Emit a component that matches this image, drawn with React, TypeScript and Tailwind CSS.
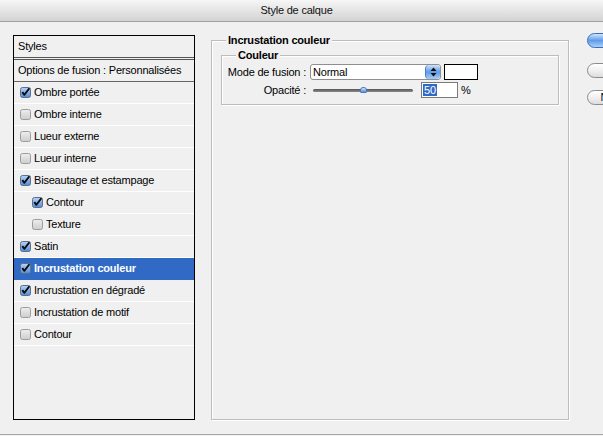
import React from "react";

type Layer = {
  label: string;
  checked?: boolean;
  indent?: boolean;
  selected?: boolean;
};

const layers: Layer[] = [
  { label: "Ombre portée", checked: true },
  { label: "Ombre interne" },
  { label: "Lueur externe" },
  { label: "Lueur interne" },
  { label: "Biseautage et estampage", checked: true },
  { label: "Contour", checked: true, indent: true },
  { label: "Texture", indent: true },
  { label: "Satin", checked: true },
  { label: "Incrustation couleur", checked: true, selected: true },
  { label: "Incrustation en dégradé", checked: true },
  { label: "Incrustation de motif" },
  { label: "Contour" },
];

const CheckBox = ({ checked }: { checked?: boolean }) => (
  <svg width="11" height="11" viewBox="0 0 11 11" className="shrink-0">
    <defs>
      <linearGradient id="cbOff" x1="0" y1="0" x2="0" y2="1">
        <stop offset="0" stopColor="#eeeeee" />
        <stop offset="1" stopColor="#cdcdcd" />
      </linearGradient>
      <linearGradient id="cbOn" x1="0" y1="0" x2="0" y2="1">
        <stop offset="0" stopColor="#b8d4f4" />
        <stop offset="1" stopColor="#4f8ad6" />
      </linearGradient>
    </defs>
    <rect
      x="0.5"
      y="0.5"
      width="10"
      height="10"
      rx="2"
      fill={checked ? "url(#cbOn)" : "url(#cbOff)"}
      stroke={checked ? "#5a6f8c" : "#9c9c9c"}
    />
    {checked && (
      <path
        d="M2.3 5.2 L4.4 7.8 L9.4 1.2"
        fill="none"
        stroke="#0a0a0a"
        strokeWidth="1.9"
        strokeLinejoin="round"
      />
    )}
  </svg>
);

const AquaButton = ({
  label,
  primary,
  className,
}: {
  label: string;
  primary?: boolean;
  className?: string;
}) => (
  <div
    className={`h-[15px] w-[106px] shrink-0 rounded-l-full border flex items-center justify-center text-[11px] leading-none whitespace-nowrap overflow-hidden ${
      primary
        ? "border-[#3a6fb8] bg-gradient-to-b from-[#cfe3fb] via-[#5f9ce8] to-[#a9d0fb] text-white"
        : "border-[#8c8c8c] bg-gradient-to-b from-[#ffffff] via-[#f0f0f0] to-[#dcdcdc] text-black"
    } ${className ?? ""}`}
  >
    {label}
  </div>
);

export default function App() {
  return (
    <div
      className="w-[603px] h-[436px] bg-[#f0f0f0] overflow-hidden flex flex-col text-black"
      style={{ fontFamily: '"Liberation Sans", Arial, sans-serif' }}
    >
      {/* Title bar */}
      <div className="h-[22px] shrink-0 border-b border-[#a0a0a0] bg-gradient-to-b from-[#f6f6f6] to-[#d3d3d3] flex items-center justify-center pr-[10px]">
        <span className="text-[11px] tracking-[-0.2px] text-[#111]">Style de calque</span>
      </div>

      <div className="flex flex-1 min-h-0">
        {/* Left styles list */}
        <div className="shrink-0 ml-[13px] mt-[13px] w-[182px] h-[385px] border border-black flex flex-col text-[11px] tracking-[-0.2px] whitespace-nowrap">
          <div className="h-[21px] flex items-center pl-[4px]">Styles</div>
          <div className="h-[3px] border-y border-[#555]" />
          <div className="h-[22px] flex items-center pl-[4px] border-b border-[#666]">
            Options de fusion : Personnalisées
          </div>
          {layers.map((l, i) => (
            <div
              key={i}
              className={`h-[22px] flex items-center gap-[3px] border-b ${
                l.indent ? "pl-[18px]" : "pl-[6px]"
              } ${
                l.selected
                  ? "bg-[#316ac5] text-white font-bold border-[#316ac5]"
                  : "border-white"
              }`}
            >
              <CheckBox checked={l.checked} />
              <span>{l.label}</span>
            </div>
          ))}
        </div>

        {/* Right settings */}
        <div className="shrink-0 ml-[16px] mt-[18px] w-[358px] h-[380px] border border-[#bdbdbd] shadow-[inset_1px_1px_0_#ffffff,1px_1px_0_#ffffff] relative whitespace-nowrap">
          <span className="absolute -top-[6px] left-[14px] px-[2px] bg-[#f0f0f0] text-[11px] font-bold leading-none tracking-[-0.2px]">
            Incrustation couleur
          </span>
          <div className="mt-[14px] mx-[9px] h-[50px] border border-[#bdbdbd] shadow-[inset_1px_1px_0_#ffffff,1px_1px_0_#ffffff] relative text-[11px] tracking-[-0.2px]">
            <span className="absolute -top-[6px] left-[14px] px-[2px] bg-[#f0f0f0] font-bold leading-none">
              Couleur
            </span>
            <div className="flex flex-col pt-[8px] gap-[2px]">
              {/* Blend mode row */}
              <div className="flex items-center h-[16px]">
                <span className="w-[84px] text-right">Mode de fusion :</span>
                <div className="ml-[4px] w-[131px] h-[16px] bg-white border border-[#8f8f8f] rounded-[3px] flex items-center justify-between pl-[2px] overflow-hidden">
                  <span>Normal</span>
                  <div className="w-[15px] h-[14px] rounded-r-[3px] rounded-l-[4px] bg-gradient-to-b from-[#cfe2fb] via-[#5d9ae8] to-[#a6cdf9] border-l border-[#4f7fc0] flex items-center justify-center">
                    <svg width="7" height="10" viewBox="0 0 7 10">
                      <path d="M3.5 0.5 L6.5 4 L0.5 4 Z" fill="#111" />
                      <path d="M3.5 9.5 L6.5 6 L0.5 6 Z" fill="#111" />
                    </svg>
                  </div>
                </div>
                <div className="ml-[3px] w-[34px] h-[16px] bg-white border border-black" />
              </div>
              {/* Opacity row */}
              <div className="flex items-center h-[16px]">
                <span className="w-[84px] text-right">Opacité :</span>
                <div className="ml-[7px] w-[100px] h-[6px] flex items-center relative">
                  <div className="w-full h-[3px] rounded-full bg-gradient-to-b from-[#555] to-[#8c8c8c]" />
                  <div className="absolute left-[47px] top-[0px] w-[7px] h-[6px] rounded-t-[3px] rounded-b-[1px] bg-gradient-to-b from-[#d4e4fb] to-[#5b8fd9] border border-[#4f79b8]" />
                </div>
                <div className="ml-[8px] w-[37px] h-[16px] bg-white border border-[#7a7a7a] flex items-center pl-[1px]">
                  <span className="bg-[#316ac5] text-white px-[1px] leading-[12px]">50</span>
                </div>
                <span className="ml-[3px]">%</span>
              </div>
            </div>
          </div>
        </div>

        {/* Buttons */}
        <div className="shrink-0 ml-[18px] mt-[11px] flex flex-col">
          <AquaButton label="OK" primary />
          <AquaButton label="Annuler" className="mt-[15px]" />
          <AquaButton label="Nouveau style..." className="mt-[12px]" />
        </div>
      </div>
      <div className="h-[1px] mb-[1px] bg-[#a8a8a8] shrink-0" />
    </div>
  );
}
